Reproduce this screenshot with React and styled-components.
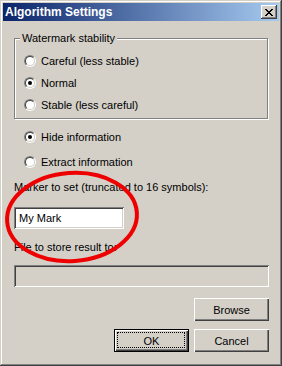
import styled, { createGlobalStyle } from "styled-components";

const Global = createGlobalStyle`
  html, body {
    margin: 0;
    padding: 0;
    background: #d4d0c8;
  }
`;

const Window = styled.div`
  position: relative;
  width: 282px;
  height: 366px;
  box-sizing: border-box;
  padding: 3px;
  display: flex;
  flex-direction: column;
  background: #d4d0c8;
  box-shadow: inset -1px -1px #404040, inset 1px 1px #d4d0c8,
    inset -2px -2px #808080, inset 2px 2px #ffffff;
  font-family: "Liberation Sans", Arial, sans-serif;
  font-size: 11px;
  color: #000;
`;

const TitleBar = styled.div`
  height: 18px;
  display: flex;
  align-items: center;
  justify-content: space-between;
  padding: 0 2px;
  background: linear-gradient(to right, #0a246a, #a6caf0);
`;

const Title = styled.div`
  color: #fff;
  font-weight: bold;
  font-size: 12px;
  line-height: 18px;
`;

const CloseButton = styled.div`
  width: 16px;
  height: 14px;
  display: flex;
  align-items: center;
  justify-content: center;
  background: #d4d0c8;
  box-shadow: inset -1px -1px #404040, inset 1px 1px #ffffff,
    inset -2px -2px #808080;
`;

const Body = styled.div`
  display: flex;
  flex-direction: column;
  padding: 17px 10px 0 11px;
`;

const Group = styled.div`
  position: relative;
  margin-right: 1px;
  padding: 11px 0 2px 9px;
  border: 1px solid #808080;
  box-shadow: inset 1px 1px #ffffff, 1px 1px #ffffff;
`;

const Legend = styled.span`
  position: absolute;
  top: -8px;
  left: 5px;
  padding: 0 2px;
  line-height: 14px;
  background: #d4d0c8;
`;

const Options = styled.div`
  display: flex;
  flex-direction: column;
  padding-left: ${(p) => p.$indent || 0}px;
  margin-top: ${(p) => p.$top || 0}px;
  gap: ${(p) => p.$gap || 0}px;
`;

const RadioRow = styled.label`
  display: flex;
  align-items: center;
  gap: 5px;
  height: ${(p) => p.$h}px;
`;

const Radio = styled.span`
  position: relative;
  flex: none;
  width: 12px;
  height: 12px;
  box-sizing: border-box;
  border-radius: 50%;
  border: 1px solid;
  border-color: #808080 #ffffff #ffffff #808080;

  &::before {
    content: "";
    position: absolute;
    inset: 0;
    border-radius: 50%;
    border: 1px solid;
    border-color: #404040 #d4d0c8 #d4d0c8 #404040;
    background: #fff;
  }

  &::after {
    content: "";
    display: ${(p) => (p.$checked ? "block" : "none")};
    position: absolute;
    left: 3px;
    top: 3px;
    width: 4px;
    height: 4px;
    border-radius: 50%;
    background: #000;
  }
`;

const Label = styled.div`
  line-height: 14px;
  margin-top: ${(p) => p.$top}px;
`;

const Field = styled.input`
  box-sizing: border-box;
  width: ${(p) => p.$w};
  height: 22px;
  margin-top: ${(p) => p.$top}px;
  padding: 0 5px;
  border: none;
  outline: none;
  font: inherit;
  color: #000;
  background: ${(p) => (p.disabled ? "#d4d0c8" : "#ffffff")};
  box-shadow: inset 1px 1px #808080, inset -1px -1px #ffffff,
    inset 2px 2px #404040, inset -2px -2px #d4d0c8;
`;

const ButtonRow = styled.div`
  display: flex;
  justify-content: flex-end;
  gap: 5px;
  margin-top: ${(p) => p.$top}px;
`;

const Button = styled.button`
  position: relative;
  box-sizing: border-box;
  width: 75px;
  height: 23px;
  padding: 0;
  font: inherit;
  color: #000;
  background: #d4d0c8;
  border: ${(p) => (p.$default ? "1px solid #000" : "none")};
  box-shadow: ${(p) =>
    p.$default
      ? "inset 1px 1px #ffffff, inset -1px -1px #404040, inset -2px -2px #808080"
      : "inset 1px 1px #ffffff, inset -1px -1px #404040, inset -2px -2px #808080"};

  &::after {
    content: "";
    display: ${(p) => (p.$default ? "block" : "none")};
    position: absolute;
    inset: 2px 3px 3px 2px;
    border: 1px dotted #000;
  }
`;

const Marker = styled.svg`
  position: absolute;
  left: 0;
  top: 0;
  pointer-events: none;
`;

const CloseGlyph = () => (
  <svg width="8" height="7" viewBox="0 0 8 7" shapeRendering="crispEdges">
    <path
      d="M0 0h2v1H0zM6 0h2v1H6zM1 1h2v1H1zM5 1h2v1H5zM2 2h4v1H2zM3 3h2v1H3zM2 4h4v1H2zM1 5h2v1H1zM5 5h2v1H5zM0 6h2v1H0zM6 6h2v1H6z"
      fill="#000"
    />
  </svg>
);

const App = () => {
  return (
    <>
      <Global />
      <Window>
        <TitleBar>
          <Title>Algorithm Settings</Title>
          <CloseButton>
            <CloseGlyph />
          </CloseButton>
        </TitleBar>

        <Body>
          <Group>
            <Legend>Watermark stability</Legend>
            <Options>
              <RadioRow $h={22}>
                <Radio />
                Careful (less stable)
              </RadioRow>
              <RadioRow $h={22}>
                <Radio $checked />
                Normal
              </RadioRow>
              <RadioRow $h={22}>
                <Radio />
                Stable (less careful)
              </RadioRow>
            </Options>
          </Group>

          <Options $indent={10} $top={8} $gap={5}>
            <RadioRow $h={20}>
              <Radio $checked />
              Hide information
            </RadioRow>
            <RadioRow $h={20}>
              <Radio />
              Extract information
            </RadioRow>
          </Options>

          <Label $top={8}>Marker to set (truncated to 16 symbols):</Label>
          <Field $top={13} $w="110px" defaultValue="My Mark" />

          <Label $top={11}>File to store result to:</Label>
          <Field $top={11} $w="255px" disabled />

          <ButtonRow $top={11}>
            <Button>Browse</Button>
          </ButtonRow>
          <ButtonRow $top={8}>
            <Button $default>OK</Button>
            <Button>Cancel</Button>
          </ButtonRow>
        </Body>

        <Marker width="282" height="366">
          <ellipse
            cx="72"
            cy="217"
            rx="65"
            ry="44"
            transform="rotate(-4 72 217)"
            fill="none"
            stroke="#ee0000"
            strokeWidth="4"
          />
        </Marker>
      </Window>
    </>
  );
};

export default App;
